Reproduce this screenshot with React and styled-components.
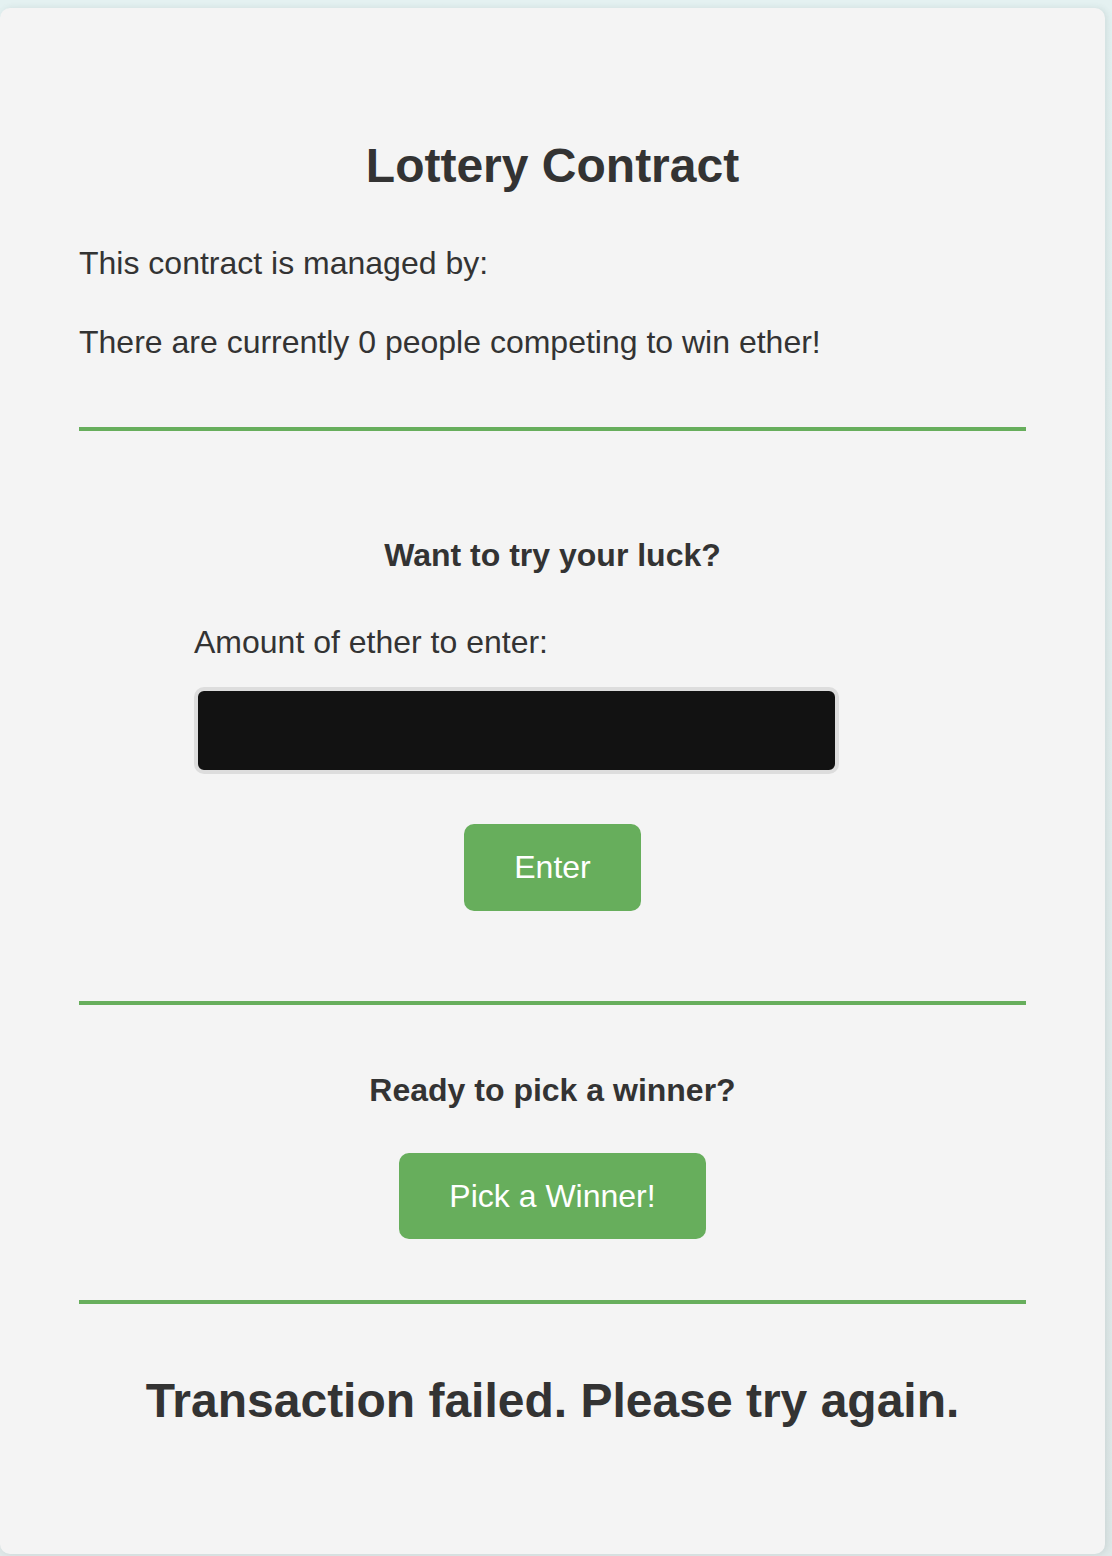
import React from "react";
import styled, { createGlobalStyle } from "styled-components";

const GlobalStyle = createGlobalStyle`
  html, body {
    margin: 0;
    padding: 0;
  }
  body {
    background: linear-gradient(180deg, #e4f1f1 0%, #dfe8e8 100%);
    font-family: "Liberation Sans", Arial, sans-serif;
    color: #333333;
  }
`;

const Page = styled.div`
  padding-top: 8px;
  width: 1112px;
  min-height: 1556px;
  box-sizing: border-box;
`;

const Card = styled.div`
  width: 1105px;
  box-sizing: border-box;
  background-color: #f4f4f4;
  border-radius: 10px;
  box-shadow: 2px 0 6px rgba(60, 80, 80, 0.12);
  padding: 130px 79px 125px;
  display: flex;
  flex-direction: column;
`;

const Title = styled.h2`
  margin: 0;
  font-size: 48px;
  line-height: 56px;
  font-weight: 700;
  text-align: center;
`;

const Text = styled.p`
  margin: ${(props) => props.$top || 0}px 0 0;
  font-size: 32px;
  line-height: 40px;
`;

const Hr = styled.hr`
  margin: ${(props) => props.$top}px 0 0;
  height: 4px;
  border: none;
  background-color: #67ae5c;
`;

const Heading = styled.h4`
  margin: ${(props) => props.$top}px 0 0;
  font-size: 32px;
  line-height: 40px;
  font-weight: 700;
  text-align: center;
`;

const Form = styled.form`
  margin: 47px 0 0 115px;
  width: 645px;
  display: flex;
  flex-direction: column;
`;

const Label = styled.label`
  font-size: 32px;
  line-height: 40px;
`;

const Input = styled.input`
  margin-top: 25px;
  height: 87px;
  box-sizing: border-box;
  background-color: #121212;
  border: 4px solid #dddddd;
  border-radius: 10px;
  color: #ffffff;
  font-size: 32px;
  font-family: inherit;
  padding: 0 16px;
  outline: none;
`;

const ButtonRow = styled.div`
  display: flex;
  justify-content: center;
  margin-top: ${(props) => props.$top}px;
`;

const Button = styled.button`
  height: ${(props) => props.$height || 87}px;
  padding: 0 50px;
  border: none;
  border-radius: 10px;
  background-color: #67ae5c;
  color: #ffffff;
  font-family: inherit;
  font-size: 32px;
  cursor: pointer;
`;

const Message = styled.h2`
  margin: 69px 0 0;
  font-size: 48px;
  line-height: 56px;
  font-weight: 700;
  text-align: center;
`;

export default function App() {
  return (
    <>
      <GlobalStyle />
      <Page>
        <Card>
          <Title>Lottery Contract</Title>
          <Text $top={49}>This contract is managed by:</Text>
          <Text $top={39}>There are currently 0 people competing to win ether!</Text>
          <Hr $top={65} />
          <Heading $top={104}>Want to try your luck?</Heading>
          <Form onSubmit={(e) => e.preventDefault()}>
            <Label>Amount of ether to enter:</Label>
            <Input type="text" />
          </Form>
          <ButtonRow $top={50}>
            <Button>Enter</Button>
          </ButtonRow>
          <Hr $top={90} />
          <Heading $top={65}>Ready to pick a winner?</Heading>
          <ButtonRow $top={43}>
            <Button $height={86}>Pick a Winner!</Button>
          </ButtonRow>
          <Hr $top={61} />
          <Message>Transaction failed. Please try again.</Message>
        </Card>
      </Page>
    </>
  );
}
